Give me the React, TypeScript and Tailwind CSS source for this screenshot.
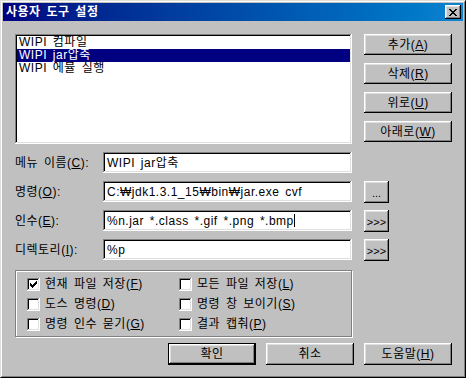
import type { ReactNode } from "react";

const raised =
  "shadow-[inset_-1px_-1px_#000000,inset_1px_1px_#ffffff,inset_-2px_-2px_#808080,inset_2px_2px_#dfdfdf]";
const sunken =
  "shadow-[inset_-1px_-1px_#ffffff,inset_1px_1px_#808080,inset_-2px_-2px_#dfdfdf,inset_2px_2px_#000000]";

type Field = { label: ReactNode; value: string; extra?: string; caret?: boolean };

const fields: Field[] = [
  { label: <>메뉴 이름(<u>C</u>):</>, value: "WIPI jar압축" },
  { label: <>명령(<u>O</u>):</>, value: "C:₩jdk1.3.1_15₩bin₩jar.exe cvf", extra: "..." },
  { label: <>인수(<u>E</u>):</>, value: "%n.jar *.class *.gif *.png *.bmp", extra: ">>>", caret: true },
  { label: <>디렉토리(<u>I</u>):</>, value: "%p", extra: ">>>" },
];

const checks: Array<{ label: ReactNode; checked?: boolean }> = [
  { label: <>현재 파일 저장(<u>F</u>)</>, checked: true },
  { label: <>모든 파일 저장(<u>L</u>)</> },
  { label: <>도스 명령(<u>D</u>)</> },
  { label: <>명령 창 보이기(<u>S</u>)</> },
  { label: <>명령 인수 묻기(<u>G</u>)</> },
  { label: <>결과 캡춰(<u>P</u>)</> },
];

function Button({ children, className = "" }: { children: ReactNode; className?: string }) {
  return (
    <div className={`flex items-center justify-center bg-[#c0c0c0] text-black ${raised} ${className}`}>
      {children}
    </div>
  );
}

function CloseIcon() {
  const rows = ["11000011", "01100110", "00111100", "00011000", "00111100", "01100110", "11000011"];
  return (
    <svg width="8" height="7" viewBox="0 0 8 7" shapeRendering="crispEdges">
      {rows.flatMap((row, y) =>
        row.split("").map((c, x) => (c === "1" ? <rect key={`${x}-${y}`} x={x} y={y} width="1" height="1" fill="#000" /> : null))
      )}
    </svg>
  );
}

function CheckMark() {
  const rows = ["0000001", "0000011", "1000111", "1101110", "1111100", "0111000", "0010000"];
  return (
    <svg width="7" height="7" viewBox="0 0 7 7" shapeRendering="crispEdges">
      {rows.flatMap((row, y) =>
        row.split("").map((c, x) => (c === "1" ? <rect key={`${x}-${y}`} x={x} y={y} width="1" height="1" fill="#000" /> : null))
      )}
    </svg>
  );
}

export default function App() {
  return (
    <div className="w-[466px] h-[378px] bg-[#c0c0c0] border border-t-[#dfdfdf] border-l-[#dfdfdf] border-r-black border-b-black font-['Liberation_Sans','Noto_Sans_CJK_KR',sans-serif] text-[12px] tracking-[0.5px] [word-spacing:2px] text-black">
      <div className="h-full flex flex-col border border-t-white border-l-white border-r-[#808080] border-b-[#808080] p-px">
        {/* title bar */}
        <div className="h-[18px] flex items-center justify-between bg-linear-to-r from-[#000080] to-[#1084d0] pl-[3px] pr-[2px]">
          <span className="text-white font-bold text-[12px] leading-none tracking-[0.5px]">사용자 도구 설정</span>
          <div className={`w-[16px] h-[14px] flex items-center justify-center bg-[#c0c0c0] ${raised}`}>
            <CloseIcon />
          </div>
        </div>

        <div className="pl-[12px] pt-[13px] w-[449px]">
          {/* list + buttons */}
          <div className="flex gap-[12px]">
            <div className={`w-[337px] h-[110px] bg-white p-[2px] ${sunken}`}>
              <div className="h-[13px] leading-[13px] pl-[2px]">WIPI 컴파일</div>
              <div className="h-[13px] leading-[13px] pl-[2px] bg-[#000080] text-white">WIPI jar압축</div>
              <div className="h-[13px] leading-[13px] pl-[2px]">WIPI 에뮬 실행</div>
            </div>
            <div className="flex flex-col gap-[8px]">
              <Button className="w-[88px] h-[21px]">추가(<u>A</u>)</Button>
              <Button className="w-[88px] h-[21px]">삭제(<u>R</u>)</Button>
              <Button className="w-[88px] h-[21px]">위로(<u>U</u>)</Button>
              <Button className="w-[88px] h-[21px]">아래로(<u>W</u>)</Button>
            </div>
          </div>

          {/* fields */}
          <div className="mt-[8px] flex flex-col gap-[8px]">
            {fields.map((f, i) => (
              <div key={i} className="flex items-center h-[21px]">
                <div className="w-[88px] whitespace-nowrap">{f.label}</div>
                <div className={`w-[249px] h-[21px] bg-white flex items-center pl-[4px] whitespace-nowrap overflow-hidden ${sunken}`}>
                  {f.value}
                  {f.caret && <span className="inline-block w-px h-[13px] bg-black" />}
                </div>
                {f.extra && (
                  <Button className="ml-[12px] w-[25px] h-[22px] text-[11px] tracking-normal pt-[3px]">{f.extra}</Button>
                )}
              </div>
            ))}
          </div>

          {/* options group */}
          <div className="mt-[10px] w-[337px] h-[67px] border border-[#808080] shadow-[1px_1px_0_#ffffff,inset_1px_1px_0_#ffffff] pt-[3px] pl-[11px] grid grid-cols-[152px_1fr] auto-rows-[20px]">
            {checks.map((c, i) => (
              <div key={i} className="flex items-center gap-[5px] whitespace-nowrap">
                <div className={`w-[13px] h-[13px] bg-white flex items-center justify-center ${sunken}`}>
                  {c.checked && <CheckMark />}
                </div>
                <span>{c.label}</span>
              </div>
            ))}
          </div>

          {/* dialog buttons */}
          <div className="mt-[6px] flex justify-end gap-[10px]">
            <Button className="w-[88px] h-[22px] border border-black">확인</Button>
            <Button className="w-[88px] h-[22px]">취소</Button>
            <Button className="w-[88px] h-[22px]">도움말(<u>H</u>)</Button>
          </div>
        </div>
      </div>
    </div>
  );
}
